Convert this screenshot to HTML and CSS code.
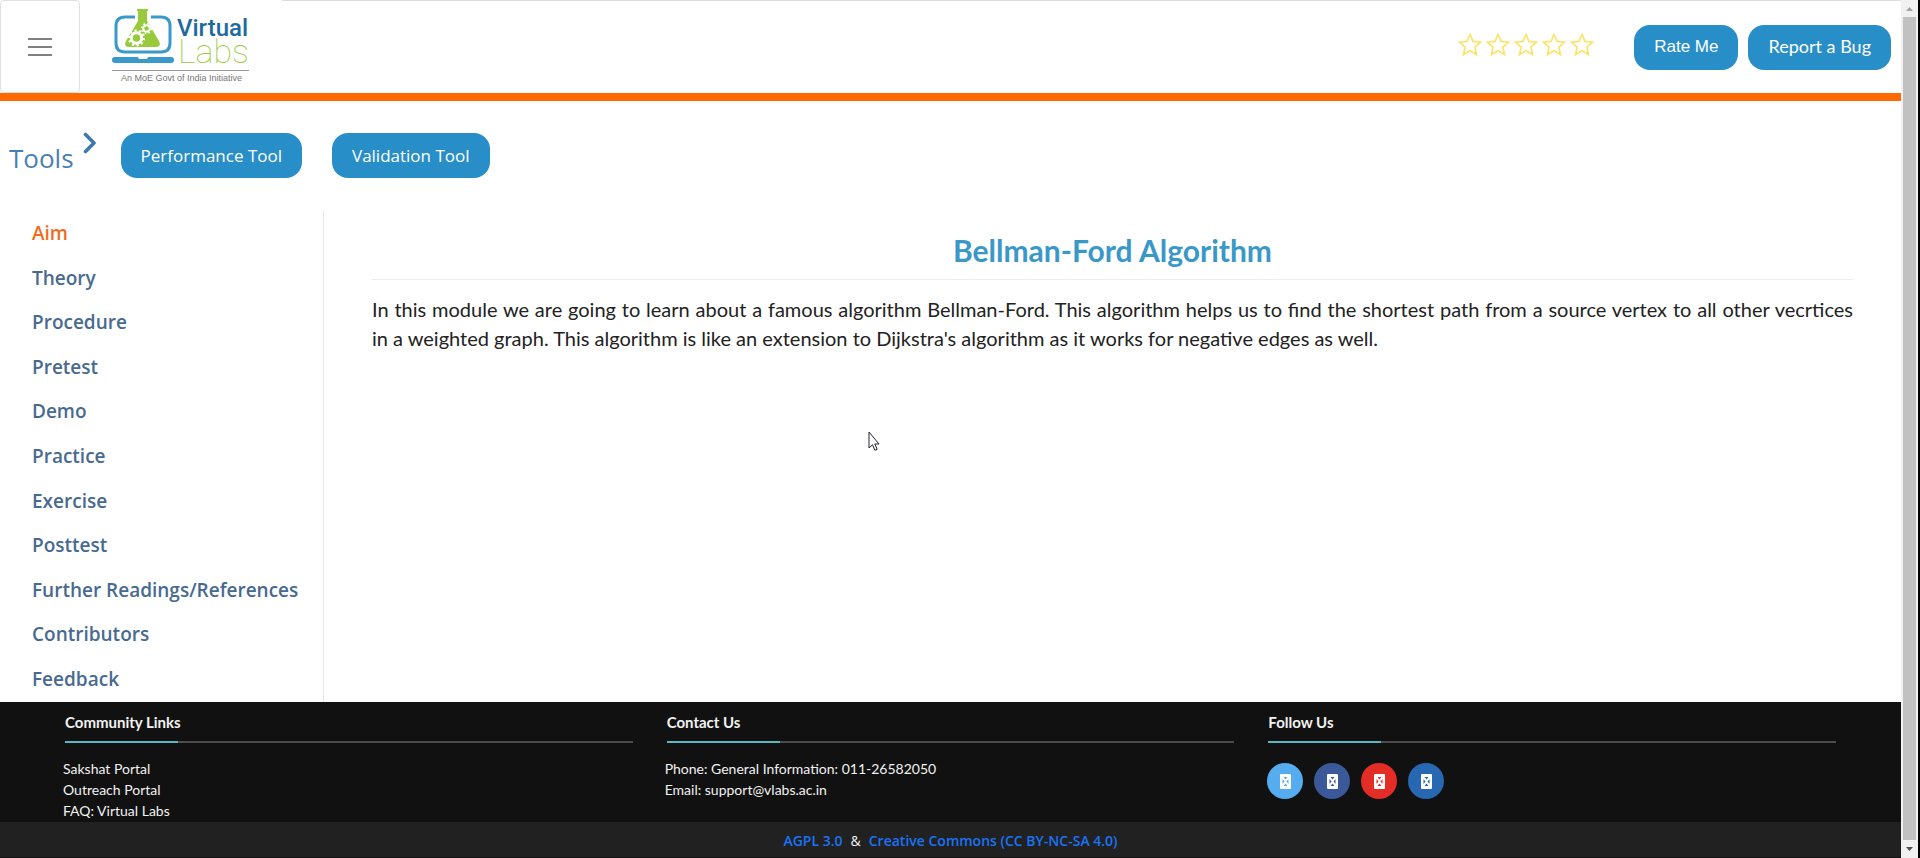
FILE: index.html
```html
<!DOCTYPE html>
<html lang="en">
<head>
<meta charset="utf-8">
<title>Bellman-Ford Algorithm - Virtual Labs</title>
<link rel="stylesheet" href="styles.css">
</head>
<body>
<div class="page">
  <header class="header">
    <button class="menu-toggle" type="button" aria-label="Toggle menu">
      <svg width="24" height="18" viewBox="0 0 24 18"><path d="M0 1h24M0 9h24M0 17h24" stroke="#808080" stroke-width="2"/></svg>
    </button>
    <a class="logo" href="#" aria-label="Virtual Labs">
      <svg width="144" height="76" viewBox="0 0 144 76">
        <g fill="none" stroke="#3a99cb" stroke-width="3">
          <path d="M23 9H13Q4 9 4 18v17q0 9 9 9h36q9 0 9-9V18q0-9-9-9H39"/>
        </g>
        <path d="M2.500 49H26q0 2 2 2h6q2 0 2-2h23.500q2.500 0 2.500 3t-3 3H3q-3 0-3-3t2.500-3z" fill="#3a99cb"/>
        <path d="M25 1h11v2h-1v10l12 20q3 6-4 6H18q-7 0-4-6l12-20V3h-1z" fill="#97cb3c"/>
        <g fill="none" stroke="#fff">
          <circle cx="24.500" cy="30" r="5.200" stroke-width="3"/>
          <circle cx="24.500" cy="30" r="7.500" stroke-width="2" stroke-dasharray="2.200 2.512"/>
          <circle cx="34.500" cy="20.500" r="3.300" stroke-width="2"/>
          <circle cx="34.500" cy="20.500" r="4.900" stroke-width="1.500" stroke-dasharray="1.700 2.148"/>
        </g>
        <text class="logo-virtual" x="65" y="28">Virtual</text>
        <text class="logo-labs" x="66" y="55">Labs</text>
        <path d="M0 62.500h137" stroke="#999"/>
        <text class="logo-tag" x="9" y="73">An MoE Govt of India Initiative</text>
      </svg>
    </a>
    <div class="header-right">
      <svg class="stars" width="136" height="24" viewBox="0 0 136 24" role="img" aria-label="Rating: 0 of 5">
        <defs><path id="star" d="M12 1.500l3 6.900 7.500.7-5.600 5 1.600 7.400L12 17.700l-6.500 3.800 1.600-7.400-5.600-5 7.500-.7z" fill="none" stroke="#fbe36c" stroke-width="1.700"/></defs>
        <use href="#star"/><use href="#star" x="28"/><use href="#star" x="56"/><use href="#star" x="84"/><use href="#star" x="112"/>
      </svg>
      <button class="btn btn-rate" type="button">Rate Me</button>
      <button class="btn btn-bug" type="button">Report a Bug</button>
    </div>
  </header>

  <section class="tools">
    <h2 class="tools-title">Tools</h2>
    <svg class="chevron" width="14" height="22" viewBox="0 0 14 22"><path d="M2.500 2.500L11 11l-8.500 8.500" fill="none" stroke="#3f78ae" stroke-width="3.600" stroke-linecap="round" stroke-linejoin="round"/></svg>
    <button class="btn" type="button">Performance Tool</button>
    <button class="btn" type="button">Validation Tool</button>
  </section>

  <div class="content">
    <nav class="sidebar">
      <a class="active" href="#">Aim</a>
      <a href="#">Theory</a>
      <a href="#">Procedure</a>
      <a href="#">Pretest</a>
      <a href="#">Demo</a>
      <a href="#">Practice</a>
      <a href="#">Exercise</a>
      <a href="#">Posttest</a>
      <a href="#">Further Readings/References</a>
      <a href="#">Contributors</a>
      <a href="#">Feedback</a>
    </nav>
    <main class="main">
      <h1 class="title">Bellman-Ford Algorithm</h1>
      <p class="intro">In this module we are going to learn about a famous algorithm Bellman-Ford. This algorithm helps us to find the shortest path from a source vertex to all other vecrtices in a weighted graph. This algorithm is like an extension to Dijkstra's algorithm as it works for negative edges as well.</p>
    </main>
  </div>

  <footer class="footer">
    <div class="footer-columns">
      <section>
        <h3 class="footer-title">Community Links</h3>
        <ul class="footer-list">
          <li><a href="#">Sakshat Portal</a></li>
          <li><a href="#">Outreach Portal</a></li>
          <li><a href="#">FAQ: Virtual Labs</a></li>
        </ul>
      </section>
      <section>
        <h3 class="footer-title">Contact Us</h3>
        <ul class="footer-list">
          <li>Phone: General Information: 011-26582050</li>
          <li>Email: <a href="#">support@vlabs.ac.in</a></li>
        </ul>
      </section>
      <section>
        <h3 class="footer-title">Follow Us</h3>
        <svg class="defs" width="0" height="0"><defs><g id="glyph"><rect width="11" height="15" rx="1" fill="#fff"/><path d="M3.500 3h4L5.500 5.500zM3.500 12h4L5.500 9.500zM2.500 5v5L4.500 7.500zM8.500 5v5L6.500 7.500z" fill="currentColor"/></g></defs></svg>
        <div class="social">
          <a class="twitter" href="#" aria-label="Twitter"><svg width="11" height="15"><use href="#glyph"/></svg></a>
          <a class="facebook" href="#" aria-label="Facebook"><svg width="11" height="15"><use href="#glyph"/></svg></a>
          <a class="youtube" href="#" aria-label="YouTube"><svg width="11" height="15"><use href="#glyph"/></svg></a>
          <a class="linkedin" href="#" aria-label="LinkedIn"><svg width="11" height="15"><use href="#glyph"/></svg></a>
        </div>
      </section>
    </div>
    <div class="license"><a href="#">AGPL 3.0</a><span>&amp;</span><a href="#">Creative Commons (CC BY-NC-SA 4.0)</a></div>
  </footer>
</div>
<div class="scrollbar" aria-hidden="true">
  <svg width="16" height="17" viewBox="0 0 16 17"><path d="M5 11h7L8.500 7z" fill="#a3a3a3"/></svg>
  <div class="thumb"></div>
  <svg width="16" height="18" viewBox="0 0 16 18"><path d="M5 7h7l-3.500 4z" fill="#505050"/></svg>
</div>
<svg class="cursor" width="13" height="21" viewBox="0 0 13 21" aria-hidden="true"><path d="M1 1v16l3.500-3.300 2.400 5.600 2.300-1-2.400-5.300H11z" fill="#fff" stroke="#223" stroke-width="1"/></svg>
</body>
</html>
```

FILE: styles.css
```css
* { box-sizing: border-box; }

body {
  margin: 0;
  min-height: 100vh;
  display: flex;
  background: #fff;
  font-family: "Open Sans", sans-serif;
}

a { color: inherit; text-decoration: none; }
svg { display: block; flex: none; }
h1, h2, h3, p, ul { margin: 0; padding: 0; }

.page {
  flex: 1;
  min-width: 0;
  display: flex;
  flex-direction: column;
}

/* Header */
.header {
  display: flex;
  align-items: stretch;
  height: 101px;
  border-bottom: 8px solid #ff6a00;
}

.menu-toggle {
  width: 80px;
  display: grid;
  place-items: center;
  padding: 0;
  background: #fff;
  border: 1px solid #e0e0e0;
  border-radius: 4px;
}

.logo { padding: 8px 26px 0 32px; }
.logo-virtual { font: 500 24px Roboto, sans-serif; fill: #1d6a9f; }
.logo-labs { font: 100 34px Roboto, sans-serif; fill: #97cb3c; }
.logo-tag { font: 9px "Liberation Sans", sans-serif; fill: #777; }

.header-right {
  flex: 1;
  display: flex;
  align-items: center;
  justify-content: flex-end;
  gap: 10px;
  padding: 0 10px 0 0;
  border-top: 1px solid #ddd;
}

.stars { margin: 0 30px 4px 0; }

.btn {
  height: 45px;
  padding: 0 20px;
  border: 0;
  border-radius: 16px;
  background: #288ec8;
  color: #fff;
  font: 17px "Open Sans", sans-serif;
}

.btn-rate { font-family: "Liberation Sans", sans-serif; }
.btn-bug { padding-bottom: 2px; font-family: Lato, sans-serif; font-size: 18px; }

/* Tools */
.tools {
  display: flex;
  align-items: center;
  padding: 31px 9px 33px;
}

.tools-title {
  font-size: 26px;
  font-weight: 400;
  line-height: 36px;
  color: #4a7fb5;
  padding-top: 6px;
}

.chevron { margin: 0 24px 24px 9px; }
.tools .btn + .btn { margin-left: 30px; }

/* Content */
.content { flex: 1; display: flex; }

.sidebar {
  display: grid;
  grid-auto-rows: 1fr;
  align-items: center;
  width: 324px;
  padding: 0 0 1px 32px;
  border-right: 1px solid #e6e6e6;
  font-size: 19px;
  font-weight: 600;
  line-height: 26px;
  color: #486a90;
  white-space: nowrap;
}

.sidebar .active { color: #f26b1d; }

.main { flex: 1; padding: 16px 48px 0; }

.title {
  padding: 3px 0 9px;
  border-bottom: 1px solid #eee;
  text-align: center;
  font: 700 30px/40px Lato, sans-serif;
  color: #3a98c9;
}

.intro {
  padding-top: 15px;
  font: 20px/29px Lato, sans-serif;
  color: #222;
  text-align: justify;
}

/* Footer */
.footer { background: #111; color: #f2f2f2; }

.footer-columns {
  display: grid;
  grid-template-columns: repeat(3, 1fr);
  gap: 34px;
  height: 120px;
  padding: 10px 65px 0;
  font: 14px/21px Lato, sans-serif;
}

.footer-title {
  padding-bottom: 8px;
  border-bottom: 2px solid;
  border-image: linear-gradient(90deg, #5bb5c5 20%, #4d4d4d 20%) 1;
  font-size: 15px;
  line-height: 21px;
}

.footer-list {
  list-style: none;
  margin: 15px 0 0 -2px;
}

.defs { position: absolute; }

.social {
  display: flex;
  gap: 11px;
  margin: 20px 0 0 -1px;
}

.social a {
  width: 36px;
  height: 36px;
  display: grid;
  place-items: center;
  border-radius: 50%;
  background: currentColor;
}

.twitter { color: #55acee; }
.facebook { color: #3b5998; }
.youtube { color: #e52d27; }
.linkedin { color: #2867b2; }

.license {
  display: flex;
  justify-content: center;
  gap: 8px;
  padding: 9px 0 6px;
  background: #212121;
  border-bottom: 1px solid #111;
  font-size: 14px;
  line-height: 20px;
}

.license a { color: #1a73f5; font-weight: 600; }

/* Scrollbar */
.scrollbar {
  width: 19px;
  display: flex;
  flex-direction: column;
  background: #f1f1f1;
  border-right: 2px solid #000;
}

.thumb { flex: 1; margin: 0 2px; background: #c1c1c1; }

/* Mouse pointer over the page */
.cursor { position: absolute; left: 868px; top: 431px; }
```
